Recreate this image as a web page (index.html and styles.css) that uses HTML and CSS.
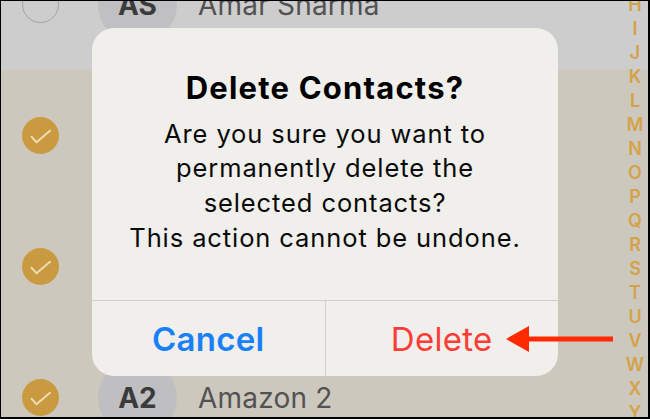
FILE: index.html
```html
<!DOCTYPE html>
<html lang="en">
<head>
<meta charset="utf-8">
<title>Delete Contacts</title>
<link rel="stylesheet" href="styles.css">
</head>
<body>
<div class="screen">
  <div class="list">
    <div class="row row-plain">
      <span class="check check-off"></span>
      <span class="avatar">AS</span>
      <span class="name">Amar Sharma</span>
    </div>
    <div class="row row-selected">
      <span class="check check-on"><svg viewBox="0 0 37 37" width="37" height="37"><circle cx="18.5" cy="18.5" r="18.5" fill="#c99a3f"/><path d="M9.5 19.7 L14.5 25.3 L28 13.7" fill="none" stroke="#efdcb2" stroke-width="2" stroke-linecap="round" stroke-linejoin="round"/></svg></span>
      <span class="avatar"></span>
      <span class="name"></span>
    </div>
    <div class="row row-selected">
      <span class="check check-on"><svg viewBox="0 0 37 37" width="37" height="37"><circle cx="18.5" cy="18.5" r="18.5" fill="#c99a3f"/><path d="M9.5 19.7 L14.5 25.3 L28 13.7" fill="none" stroke="#efdcb2" stroke-width="2" stroke-linecap="round" stroke-linejoin="round"/></svg></span>
      <span class="avatar"></span>
      <span class="name"></span>
    </div>
    <div class="row row-selected">
      <span class="check check-on"><svg viewBox="0 0 37 37" width="37" height="37"><circle cx="18.5" cy="18.5" r="18.5" fill="#c99a3f"/><path d="M9.5 19.7 L14.5 25.3 L28 13.7" fill="none" stroke="#efdcb2" stroke-width="2" stroke-linecap="round" stroke-linejoin="round"/></svg></span>
      <span class="avatar">A2</span>
      <span class="name">Amazon 2</span>
    </div>
  </div>

  <div class="index">
    <span>H</span><span>I</span><span>J</span><span>K</span><span>L</span><span>M</span>
    <span>N</span><span>O</span><span>P</span><span>Q</span><span>R</span><span>S</span>
    <span>T</span><span>U</span><span>V</span><span>W</span><span>X</span><span>Y</span>
  </div>

  <div class="dialog">
    <div class="dialog-body">
      <div class="dialog-title">Delete Contacts?</div>
      <div class="dialog-text">Are you sure you want to<br>permanently delete the<br>selected contacts?<br>This action cannot be undone.</div>
    </div>
    <div class="dialog-actions">
      <div class="btn btn-cancel">Cancel</div>
      <div class="btn btn-delete">Delete</div>
    </div>
  </div>

  <svg class="arrow" viewBox="0 0 120 40" width="120" height="40">
    <rect x="27" y="16.5" width="86" height="5" fill="#ff2a00"/>
    <polygon points="6,19 29,6 29,32" fill="#ff2a00"/>
  </svg>
</div>
</body>
</html>
```

FILE: styles.css
```css
* { box-sizing: border-box; }

html, body {
  margin: 0;
  padding: 0;
  background: #000;
}

.screen {
  position: relative;
  width: 650px;
  height: 419px;
  border-style: solid;
  border-color: #000;
  border-width: 1px 2px 2px 1px;
  overflow: hidden;
  font-family: Inter, "Liberation Sans", sans-serif;
  background: #ccc8be;
}

.list {
  display: flex;
  flex-direction: column;
  margin-top: -62px;
}

.row {
  height: 131px;
  display: flex;
  align-items: center;
  padding-left: 21px;
  flex-shrink: 0;
}

.row-plain { background: #cdcdcd; }
.row-selected { background: #ccc8be; }

.check {
  width: 37px;
  height: 37px;
  border-radius: 50%;
  flex-shrink: 0;
  display: block;
}

.check svg { display: block; }

.check-off {
  border: 1.5px solid #a2a2a2;
}

.avatar {
  width: 79px;
  height: 79px;
  border-radius: 50%;
  margin-left: 39px;
  background: #bfbfc1;
  display: flex;
  align-items: center;
  justify-content: center;
  font-size: 28px;
  font-weight: 700;
  color: #3b3b3c;
  flex-shrink: 0;
}

.row-plain .avatar { background: #c0c0c2; }

.name {
  margin-left: 21px;
  font-size: 28px;
  color: #525252;
  letter-spacing: 0.2px;
}

.index {
  position: absolute;
  top: -8px;
  right: 0;
  width: 26px;
  display: flex;
  flex-direction: column;
  align-items: center;
  font-size: 18px;
  font-weight: 600;
  line-height: 24px;
  color: #d4a24a;
}

.dialog {
  position: absolute;
  left: 91px;
  top: 27px;
  width: 466px;
  height: 348px;
  background: #f0efec;
  border-radius: 22px;
  display: flex;
  flex-direction: column;
  overflow: hidden;
}

.dialog-body {
  height: 272px;
  padding-top: 42px;
  text-align: center;
  color: #000;
}

.dialog-title {
  font-size: 31px;
  font-weight: 700;
  line-height: 36px;
  letter-spacing: 1.2px;
}

.dialog-text {
  margin-top: 10.5px;
  font-size: 25.5px;
  line-height: 34.7px;
  letter-spacing: 0.9px;
  color: #0a0a0a;
}

.dialog-actions {
  flex: 1;
  display: flex;
  border-top: 1px solid #cfcecb;
}

.btn {
  flex: 1;
  display: flex;
  align-items: center;
  justify-content: center;
  font-size: 33px;
  letter-spacing: 0.3px;
}

.btn-cancel {
  color: #1a80f8;
  font-weight: 600;
  border-right: 1px solid #cfcecb;
}

.btn-delete {
  color: #fc3c36;
}

.arrow {
  position: absolute;
  left: 499px;
  top: 319px;
  display: block;
}
```
